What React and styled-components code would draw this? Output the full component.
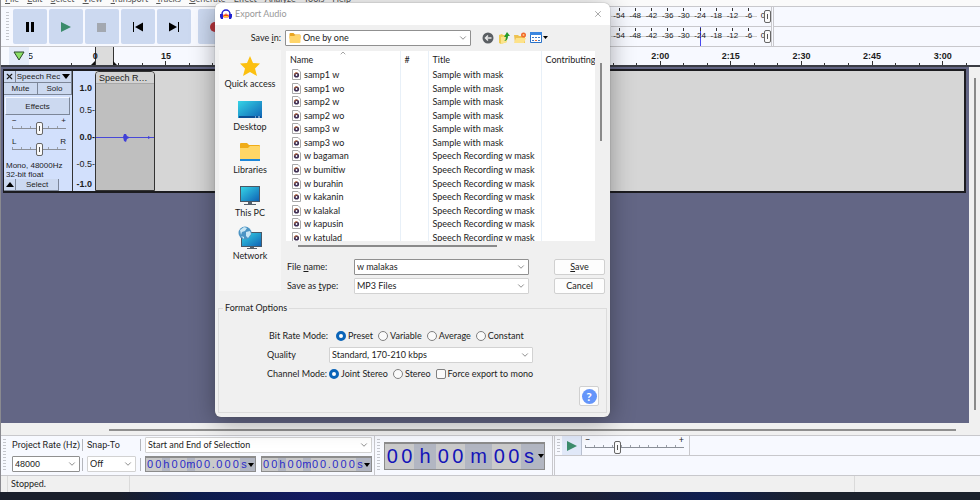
import React, { useState } from 'react'
import styled, { createGlobalStyle } from "styled-components";
import { ChevronDown, ChevronUp, X } from "lucide-react";

const menus = ["File", "Edit", "Select", "View", "Transport", "Tracks", "Generate", "Effect", "Analyze", "Tools", "Help"];
const levels = ["-54", "-48", "-42", "-36", "-30", "-24", "-18", "-12", "-6", "0"];
const times = ["0", "15", "30", "45", "1:00", "1:15", "1:30", "1:45", "2:00", "2:15", "2:30", "2:45", "3:00"];

const files = [
    { name: "samp1 w", title: "Sample with mask" },
    { name: "samp1 wo", title: "Sample with mask" },
    { name: "samp2 w", title: "Sample with mask" },
    { name: "samp2 wo", title: "Sample with mask" },
    { name: "samp3 w", title: "Sample with mask" },
    { name: "samp3 wo", title: "Sample with mask" },
    { name: "w bagaman", title: "Speech Recording w mask" },
    { name: "w bumitiw", title: "Speech Recording w mask" },
    { name: "w burahin", title: "Speech Recording w mask" },
    { name: "w kakanin", title: "Speech Recording w mask" },
    { name: "w kalakal", title: "Speech Recording w mask" },
    { name: "w kapusin", title: "Speech Recording w mask" },
    { name: "w katulad", title: "Speech Recording w mask" },
];

function Select({ value, options = [], ...rest }) {
    return (
        <SelectBox>
            <select defaultValue={value} {...rest}>
                {[value, ...options].map(o => <option key={o}>{o}</option>)}
            </select>
            <ChevronDown size={10} strokeWidth={2} />
        </SelectBox>
    )
}

function Meter({ label, peak }) {
    return (
        <MeterRow>
            <Scale>
                {levels.map(l => <Level key={l} $peak={peak === l}><span>{l}</span></Level>)}
            </Scale>
            <Range type="range" defaultValue="100" aria-label={label} />
        </MeterRow>
    )
}

function Transport() {
    return (
        <TopBar>
            <TransportTools>
                <Grip />
                <ToolButton aria-label="Pause">
                    <svg width="10" height="10" viewBox="0 0 10 10"><path d="M1 0h3v10H1zM6 0h3v10H6z" /></svg>
                </ToolButton>
                <ToolButton aria-label="Play">
                    <svg width="12" height="12" viewBox="0 0 12 12"><path fill="#3c8c6c" d="M1 1l10 5-10 5z" /></svg>
                </ToolButton>
                <ToolButton aria-label="Stop">
                    <svg width="10" height="10" viewBox="0 0 10 10"><path fill="#a3a8b0" d="M0 1h9v9H0z" /></svg>
                </ToolButton>
                <ToolButton aria-label="Skip to start">
                    <svg width="12" height="12" viewBox="0 0 12 12"><path d="M1 1h1v10H1zM11 1.500v9L3 6z" /></svg>
                </ToolButton>
                <ToolButton aria-label="Skip to end">
                    <svg width="12" height="12" viewBox="0 0 12 12"><path d="M10 1h1v10h-1zM1 1.500v9L9 6z" /></svg>
                </ToolButton>
                <ToolButton aria-label="Record" $apart>
                    <svg width="10" height="10" viewBox="0 0 10 10"><circle fill="#b8343c" cx="5" cy="5" r="5" /></svg>
                </ToolButton>
            </TransportTools>
            <Meters>
                <Meter label="Recording volume" />
                <Meter label="Playback volume" peak="-24" />
            </Meters>
            <MeterRest />
        </TopBar>
    )
}

function Timeline() {
    return (
        <Ruler>
            <PinButton aria-label="Pinned play head">
                <svg width="12" height="10" viewBox="0 0 12 10"><path d="M1 1h10L6 9z" fill="#8be065" stroke="#2d4a2c" /></svg>
            </PinButton>
            <Before>-15</Before>
            <RulerScale>
                {times.map((t, i) => (
                    <RulerCell key={t}>
                        {i === 0 && <Selected />}
                        <b>{t}</b>
                        <Ticks><i /><i /><i /></Ticks>
                    </RulerCell>
                ))}
            </RulerScale>
        </Ruler>
    )
}

function Track() {
    return (
        <TrackRow>
            <TrackPanel>
                <PanelRow>
                    <CloseTrack aria-label="Close track"><X size={9} strokeWidth={3} /></CloseTrack>
                    <PanelButton>Speech Rec
                        <svg width="8" height="5" viewBox="0 0 8 5"><path d="M0 0h8L4 5z" /></svg>
                    </PanelButton>
                </PanelRow>
                <PanelRow>
                    <PanelButton>Mute</PanelButton>
                    <PanelButton>Solo</PanelButton>
                </PanelRow>
                <EffectsButton>Effects</EffectsButton>
                <Knob>
                    <span>−</span><span>+</span>
                    <Range type="range" aria-label="Gain" $ticks />
                </Knob>
                <Knob>
                    <span>L</span><span>R</span>
                    <Range type="range" aria-label="Pan" $ticks />
                </Knob>
                <Info>Mono, 48000Hz<br />32-bit float</Info>
                <PanelRow>
                    <CloseTrack aria-label="Collapse">
                        <svg width="8" height="5" viewBox="0 0 8 5"><path d="M0 5h8L4 0z" /></svg>
                    </CloseTrack>
                    <SelectButton>Select</SelectButton>
                </PanelRow>
            </TrackPanel>
            <Amplitude>
                <b>1.0</b>
                <span>0.5-</span>
                <b>0.0-</b>
                <span>-0.5-</span>
                <b>-1.0</b>
            </Amplitude>
            <Clip>
                <ClipTitle>Speech R…</ClipTitle>
                <svg width="58" height="108" viewBox="0 0 58 108">
                    <path d="M0 53.500h58" stroke="#4848d8" />
                    <path fill="#4040d8" d="M27 53l1-3 2 0 1 2 2 1v1l-2 1-1 3-2-1zM52 52l3 1.500-3 1.500z" />
                </svg>
            </Clip>
            <TrackRest />
        </TrackRow>
    )
}

function FolderIcon({ size = 12 }) {
    return (
        <svg width={size} height={size} viewBox="0 0 24 24">
            <path fill="#e9a520" d="M1 4q0-2 2-2h6l3 3h9q2 0 2 2v6H1z" />
            <path fill="#ffd56a" d="M1 8h9l3-2h8q2 0 2 2v12q0 2-2 2H3q-2 0-2-2z" />
        </svg>
    )
}

function Screen({ stand }) {
    return (
        <>
            <defs>
                <linearGradient id="screen" x1="0" y1="0" x2="1" y2="1">
                    <stop offset="0" stopColor="#35d4e6" />
                    <stop offset="1" stopColor="#0f63b5" />
                </linearGradient>
            </defs>
            {stand && <path fill="#55606b" d="M10 18h4v3h4v1H6v-1h4z" />}
            {stand && <path fill="#4a5866" d="M2 3h20v16H2z" />}
        </>
    )
}

function Places() {
    return (
        <Sidebar>
            <Place>
                <svg width="24" height="24" viewBox="0 0 24 24"><path fill="#fcc010" d="M12 2l3 7 7 .6-5 5 2 7.400-7-4-7 4 2-7.400-5-5L9 9z" /></svg>
                Quick access
            </Place>
            <Place>
                <svg width="24" height="24" viewBox="0 0 24 24"><Screen /><path fill="url(#screen)" d="M0 4h24v17H0z" /><path fill="#0c4f94" d="M1 19h22v2H1z" /><path fill="#d8ecff" d="M17 19.500h1v1h-1zM20 19.500h2v1h-2z" /></svg>
                Desktop
            </Place>
            <Place>
                <svg width="24" height="24" viewBox="0 0 24 24">
                    <path fill="#f0ac18" d="M2 4q0-1 1-1h6l2 2h10q1 0 1 1v5H2z" />
                    <path fill="#ffd666" d="M2 8h8l2-2h9q1 0 1 1v13H2z" />
                    <path fill="#1d86d8" d="M2 19h20v2H2z" />
                </svg>
                Libraries
            </Place>
            <Place>
                <svg width="24" height="24" viewBox="0 0 24 24"><Screen stand /><path fill="url(#screen)" d="M3 4h18v14H3z" /></svg>
                This PC
            </Place>
            <Place>
                <svg width="24" height="24" viewBox="0 0 24 24">
                    <path fill="#55606b" d="M12 20h4v2h3v1H9v-1h3z" />
                    <path fill="#4a5866" d="M3 6h21v15H3z" />
                    <path fill="url(#screen)" d="M4 7h19v13H4z" />
                    <circle cx="7" cy="7" r="6.500" fill="#4c94c4" />
                    <path fill="#c9e6f4" d="M2 4l4-3 3 1-2 3-3 1-1 3zM8 6l4-1 1 3-3 4-2-2zM3 10l3 1v2z" />
                </svg>
                Network
            </Place>
        </Sidebar>
    )
}

function FileList() {
    return (
        <Browser>
            <ListPane>
                <ListBox>
                    <table>
                        <thead>
                            <tr><th><SortMark><ChevronUp size={8} /></SortMark>Name</th><th>#</th><th>Title</th><th>Contributing</th></tr>
                        </thead>
                        <tbody>
                            {files.map(f => (
                                <tr key={f.name}>
                                    <td>
                                        <FileName>
                                            <svg width="9" height="11" viewBox="0 0 9 11">
                                                <path d="M.5.5h5.500l2.500 2.500v7.500h-8z" fill="#fff" stroke="#a8a8a8" />
                                                <circle cx="4.500" cy="6" r="2.600" fill="#3d2d52" />
                                                <path d="M2.500 5.500a2 2 0 013-1.500" stroke="#d9722e" fill="none" />
                                                <circle cx="4.500" cy="6" r=".9" fill="#fff" />
                                            </svg>
                                            {f.name}
                                        </FileName>
                                    </td>
                                    <td />
                                    <td>{f.title}</td>
                                    <td />
                                </tr>
                            ))}
                        </tbody>
                    </table>
                </ListBox>
                <ListThumb />
            </ListPane>
            <ListThumbX />
            <SaveForm>
                <label htmlFor="filename">File <u>n</u>ame:</label>
                <SelectBox $strong>
                    <input id="filename" defaultValue="w malakas" />
                    <ChevronDown size={10} />
                </SelectBox>
                <Button><span><u>S</u>ave</span></Button>
                <label htmlFor="filetype">Save as <u>t</u>ype:</label>
                <Select id="filetype" value="MP3 Files" options={["WAV Files"]} />
                <Button>Cancel</Button>
            </SaveForm>
        </Browser>
    )
}

function FormatOptions() {
    const [mode, setMode] = useState("Preset");
    const [channel, setChannel] = useState("Joint Stereo");

    return (
        <Options>
            <legend>Format Options</legend>
            <OptionRow>
                <OptionLabel $wide>Bit Rate Mode:</OptionLabel>
                {["Preset", "Variable", "Average", "Constant"].map(m => (
                    <Choice key={m}>
                        <input type="radio" name="mode" checked={mode === m} onChange={() => setMode(m)} />{m}
                    </Choice>
                ))}
            </OptionRow>
            <OptionRow>
                <OptionLabel as="label" htmlFor="quality">Quality</OptionLabel>
                <Quality><Select id="quality" value="Standard, 170-210 kbps" options={["Medium, 145-185 kbps"]} /></Quality>
            </OptionRow>
            <OptionRow>
                <OptionLabel>Channel Mode:</OptionLabel>
                {["Joint Stereo", "Stereo"].map(c => (
                    <Choice key={c}>
                        <input type="radio" name="channel" checked={channel === c} onChange={() => setChannel(c)} />{c}
                    </Choice>
                ))}
                <Choice><input type="checkbox" />Force export to mono</Choice>
            </OptionRow>
            <HelpButton aria-label="Help"><span>?</span></HelpButton>
        </Options>
    )
}

function ExportDialog() {
    return (
        <Dialog role="dialog" aria-labelledby="dialog-title">
            <TitleBar>
                <svg width="12" height="12" viewBox="0 0 12 12">
                    <path d="M2 8V6a4 4 0 018 0v2" fill="none" stroke="#2020d0" strokeWidth="1.500" />
                    <path d="M0 6h3v5H1L0 9zM9 6h3v3l-1 2H9z" fill="#2020d0" />
                    <path d="M3 8l1-2 1 1 1-2 1 2 1-1 1 2-1 2-1-1-1 1-1-1-1 1z" fill="#f04818" />
                    <path d="M4 8h4v1H4z" fill="#ffd820" />
                </svg>
                <h1 id="dialog-title">Export Audio</h1>
                <button aria-label="Close"><X size={10} strokeWidth={2} /></button>
            </TitleBar>
            <SaveIn>
                <label htmlFor="folder">Save <u>i</u>n:</label>
                <FolderBox>
                    <FolderIcon />
                    <Select id="folder" value="One by one" options={["Desktop"]} />
                </FolderBox>
                <IconButton aria-label="Back">
                    <svg width="12" height="12" viewBox="0 0 12 12"><circle cx="6" cy="6" r="5.500" fill="#5b5f63" /><path d="M9.500 6H3.500M6 3.500L3.500 6 6 8.500" stroke="#e8e8e8" strokeWidth="1.500" fill="none" /></svg>
                </IconButton>
                <IconButton aria-label="Up one level">
                    <svg width="12" height="12" viewBox="0 0 12 12"><path fill="#edcb54" d="M1 3l3-1 1 1h4v7l-6 2-2-1z" /><path fill="#fbe48c" d="M3 5l6-1v6l-6 2z" /><path fill="#259b2c" d="M6 9q2-1 2-4H6l3-5 3 4h-2q0 5-4 5z" /></svg>
                </IconButton>
                <IconButton aria-label="New folder">
                    <svg width="12" height="12" viewBox="0 0 12 12"><path fill="#eec250" d="M0 3h4l1 1h6v7H1z" /><path fill="#fde28a" d="M2 6h10l-2 5H0z" /><circle cx="9.500" cy="3" r="2.500" fill="#f0682c" /><circle cx="9.500" cy="3" r="1" fill="#ffc77a" /></svg>
                </IconButton>
                <IconButton aria-label="View">
                    <svg width="18" height="12" viewBox="0 0 18 12"><path fill="#fff" stroke="#2a72c8" d="M.5.5h11v10H.5z" /><path fill="#3a86e0" d="M0 0h12v3H0z" /><path fill="#3c78c8" d="M2 5h2v1H2zM5 5h2v1H5zM8 5h2v1H8zM2 8h2v1H2zM8 8h2v1H8z" /><path fill="#e0703a" d="M5 8h2v1H5z" /><path d="M13 4h5l-2.500 3z" /></svg>
                </IconButton>
            </SaveIn>
            <DialogMain>
                <Places />
                <FileList />
            </DialogMain>
            <FormatOptions />
        </Dialog>
    )
}

function TimeBox({ groups, big, label }) {
    return (
        <Time $big={big} aria-label={label}>
            {groups.map((g, i) => (
                <TimeGroup key={i} $unit={/[hms]/.test(g)} $big={big} $text={g}>
                    {g.split("").map((c, j) => <span key={j}>{c}</span>)}
                </TimeGroup>
            ))}
            <button aria-label="Time format"><svg width="6" height="4" viewBox="0 0 6 4"><path d="M0 0h6L3 4z" /></svg></button>
        </Time>
    )
}

function BottomBar() {
    const short = ["00", "h", "00", "m", "00", ".", "000", "s"];
    return (
        <Bottom>
            <Grip />
            <Field $width={66}>
                <label htmlFor="rate">Project Rate (Hz)</label>
                <SelectBox $strong $arial>
                    <input id="rate" defaultValue="48000" />
                    <ChevronDown size={10} />
                </SelectBox>
            </Field>
            <Divider />
            <Field $width={49}>
                <label htmlFor="snap">Snap-To</label>
                <Select id="snap" value="Off" options={["Nearest", "Prior"]} />
            </Field>
            <Divider />
            <Field $width={227}>
                <Select aria-label="Selection mode" value="Start and End of Selection" options={["Start and Length of Selection"]} />
                <TimePair>
                    <TimeBox groups={short} label="Selection start" />
                    <TimeBox groups={short} label="Selection end" />
                </TimePair>
            </Field>
            <BigTime>
                <Grip />
                <TimeBox groups={["00", "h", "00", "m", "00", "s"]} big label="Audio position" />
            </BigTime>
            <SpeedArea>
                <SpeedBar>
                    <Grip />
                    <PlayAtSpeed aria-label="Play at speed">
                        <svg width="12" height="12" viewBox="0 0 12 12"><path fill="#3c8c6c" d="M1 1l10 5-10 5z" /></svg>
                    </PlayAtSpeed>
                    <Speed>
                        <span>−</span><span>+</span>
                        <Range type="range" defaultValue="32" aria-label="Playback speed" $ticks />
                    </Speed>
                </SpeedBar>
            </SpeedArea>
        </Bottom>
    )
}

function App() {
    return (
        <Window>
            <GlobalStyle />
            <MenuBar>{menus.map(m => <button key={m}><u>{m[0]}</u>{m.slice(1)}</button>)}</MenuBar>
            <Transport />
            <Timeline />
            <Workspace>
                <Canvas><Track /></Canvas>
                <ScrollY />
            </Workspace>
            <ScrollX />
            <BottomBar />
            <Status><span>Stopped.</span><span /><span /></Status>
            <Taskbar />
            <ExportDialog />
        </Window>
    )
}

export default App;

const ui = `"Lato", "Open Sans", sans-serif`;
const arial = `"Liberation Sans", Arial, sans-serif`;

const GlobalStyle = createGlobalStyle`
  * {
    box-sizing: border-box;
  }
  body {
    margin: 0;
    overflow: hidden;
    font: 9px/12px ${ui};
    color: #1c1c1c;
  }
  button, input, select {
    font: inherit;
    color: inherit;
    margin: 0;
    padding: 0;
    border: 0;
    background: none;
    border-radius: 0;
  }
  svg {
    display: block;
    flex: none;
  }
`

const Window = styled.div`
  position: relative;
  display: flex;
  flex-direction: column;
  height: 100vh;
  background: #f7f9ff;
  border-left: 1px solid #8a8a90;
`

const MenuBar = styled.nav`
  display: flex;
  align-items: flex-end;
  gap: 8px;
  height: 6px;
  padding-left: 4px;
  overflow: hidden;
  background: #fafafa;
  color: #555;
  line-height: 15px;
  flex: none;
`

const TopBar = styled.div`
  display: flex;
  height: 41px;
  flex: none;
  border-top: 1px solid #c8c8cc;
  border-bottom: 1px solid #c8c8cc;
`

const Grip = styled.div`
  width: 3px;
  margin: 3px 2px;
  background: repeating-linear-gradient(#c4c6cc 0 1px, transparent 1px 3px);
  flex: none;
`

const TransportTools = styled.div`
  display: flex;
  align-items: stretch;
  gap: 2px;
  padding: 2px 0 2px 3px;
  flex: 0 0 610px;
`

const ToolButton = styled.button`
  width: 34px;
  display: grid;
  place-items: center;
  background: #ccd9f0;
  border-radius: 2px;
  margin-left: ${p => p.$apart ? 5 : 0}px;
`

const Meters = styled.div`
  flex: 0 0 161px;
  display: grid;
  grid-template-rows: 1fr 1fr;
  border-right: 1px solid #c8c8cc;
`

const MeterRow = styled.div`
  display: grid;
  grid-template-columns: 100%;
  align-items: center;
  overflow: hidden;
  border-bottom: 1px solid #c8c8cc;
  > * {
    grid-area: 1 / 1;
  }
  &:last-child {
    border: 0;
  }
`

const MeterRest = styled.div`
  flex: 1;
  margin-left: 1px;
  border-left: 1px solid #c8c8cc;
  background: linear-gradient(#c8c8cc, #c8c8cc) 0 19px / 100% 1px no-repeat;
`

const Scale = styled.div`
  display: grid;
  grid-template-columns: repeat(10, 1fr);
  width: 162px;
  height: 100%;
  font: 8px/18px ${arial};
`

const Level = styled.div`
  text-align: center;
  background:
    linear-gradient(#333, #333) 50% 1px / 1px 3px no-repeat,
    linear-gradient(#4848f0, #4848f0) 50% 0 / ${p => p.$peak ? 1 : 0}px 100% no-repeat,
    linear-gradient(#ccc, #ccc) 0 50% / 100% 1px no-repeat;
  &:last-child {
    background: none;
    padding-right: 4px;
  }
`

const Range = styled.input`
  appearance: none;
  width: 100%;
  height: 13px;
  background:
    ${p => p.$ticks ? `linear-gradient(#8a8f98, #8a8f98) 0 6px / 100% 1px no-repeat,
    repeating-linear-gradient(90deg, #9a9fa8 0 1px, transparent 1px 9px) 0 4px / 100% 2px no-repeat` : "none"};
  &::-webkit-slider-thumb {
    appearance: none;
    width: 7px;
    height: 13px;
    border: 1px solid #666;
    border-radius: 2px;
    background: linear-gradient(#555, #555) 50% 50% / 1px 5px no-repeat #fafafa;
  }
`

const Ruler = styled.div`
  display: flex;
  height: 20px;
  flex: none;
  border-bottom: 2px solid #3a3c44;
  font: bold 9px/18px ${arial};
  overflow: hidden;
`

const PinButton = styled.button`
  width: 20px;
  margin-left: 8px;
  display: grid;
  place-items: center;
  background: #e4ebf8;
  flex: none;
`

const Before = styled.span`
  display: flex;
  justify-content: flex-end;
  width: 4px;
  overflow: hidden;
  flex: none;
  font-weight: normal;
`

const RulerScale = styled.div`
  display: grid;
  grid-template-columns: repeat(13, 1fr);
  flex: 1;
  margin-left: 27px;
  padding-right: 2px;
`

const RulerCell = styled.div`
  position: relative;
  display: grid;
  text-align: center;
  > * {
    grid-area: 1 / 1;
  }
`

const Ticks = styled.div`
  display: grid;
  grid-template-columns: repeat(3, 1fr);
  align-items: end;
  justify-items: center;
  i {
    width: 1px;
    height: 2px;
    background: #333;
  }
  i:nth-child(2) {
    height: 4px;
  }
`

const Selected = styled.div`
  justify-self: start;
  margin-left: 50%;
  width: 19px;
  border-left: 1px solid #333;
  border-right: 1px solid #333;
  background: #dcdcdc;
  &::before, &::after {
    content: "";
    position: absolute;
    bottom: 0;
    left: calc(50% - 4px);
    border-bottom: 4px solid #111;
    border-left: 4px solid transparent;
  }
  &::after {
    left: calc(50% + 18px);
    border-left: 0;
    border-right: 4px solid transparent;
  }
`

const Workspace = styled.div`
  display: flex;
  flex: 1;
  min-height: 0;
`

const Canvas = styled.main`
  flex: 1;
  padding: 2px 3px 0 2px;
  background: #636685;
`

const ScrollY = styled.div`
  width: 11px;
  background: linear-gradient(#8a8a8a, #8a8a8a) 5px 11px / 2px calc(100% - 24px) no-repeat #f0f0f0;
`

const ScrollX = styled.div`
  height: 12px;
  flex: none;
  background: linear-gradient(#8f8f8f, #8f8f8f) 108px 6px / calc(100% - 132px) 2px no-repeat #f0f0f0;
`

const TrackRow = styled.div`
  display: flex;
  border: 1px solid #1c1c20;
  border-width: 2px 2px 2px 1px;
  height: 124px;
  background: #d6d6d6;
  font: 8px/9px ${arial};
`

const TrackPanel = styled.div`
  width: 69px;
  background: #d2e0fc;
  border-right: 1px solid #333;
  display: flex;
  flex-direction: column;
`

const PanelRow = styled.div`
  display: flex;
  height: 12px;
  flex: none;
`

const PanelButton = styled.button`
  flex: 1;
  display: flex;
  align-items: center;
  justify-content: center;
  gap: 2px;
  white-space: nowrap;
  background: #ccd9f0;
  border-right: 1px solid #7c8698;
  border-bottom: 1px solid #7c8698;
`

const CloseTrack = styled(PanelButton)`
  flex: 0 0 12px;
`

const SelectButton = styled(PanelButton)`
  flex: 0 0 43px;
`

const EffectsButton = styled.button`
  height: 18px;
  flex: none;
  margin: 2px 2px 3px 1px;
  background: #ccd9f0;
  border: 1px solid #7c8698;
  border-top-color: #f2f6ff;
  border-left-color: #f2f6ff;
`

const Knob = styled.div`
  display: grid;
  grid-template-columns: 1fr 1fr;
  grid-template-rows: 4px 13px;
  line-height: 6px;
  margin: 0 6px 4px 8px;
  span:nth-child(2) {
    text-align: right;
  }
  input {
    grid-column: 1 / 3;
  }
`

const Info = styled.div`
  white-space: nowrap;
  padding: 1px 0 0 2px;
  margin-bottom: auto;
`

const Amplitude = styled.div`
  width: 22px;
  display: grid;
  grid-template-rows: 17px 27px 27px 27px 1fr;
  align-items: center;
  padding-top: 8px;
  background: #d2e0fc;
  font-size: 9px;
  line-height: 10px;
  text-align: right;
  b:first-child, b:last-child {
    padding-right: 3px;
  }
`

const Clip = styled.div`
  width: 60px;
  border: 1px solid #333;
  border-radius: 4px 4px 0 0;
  background: #bfbfbf;
  overflow: hidden;
`

const ClipTitle = styled.div`
  height: 12px;
  padding-left: 3px;
  font-size: 9px;
  line-height: 12px;
  background: #d2d2d2;
  border-bottom: 1px solid #a8a8a8;
`

const TrackRest = styled.div`
  flex: 1;
`

const Bottom = styled.div`
  display: flex;
  height: 41px;
  flex: none;
  border-top: 1px solid #c8c8cc;
  border-bottom: 1px solid #c8c8cc;
`

const Field = styled.div`
  width: ${p => p.$width}px;
  margin-left: 4px;
  display: grid;
  grid-template-rows: 16px 16px;
  row-gap: 3px;
  padding-top: 1px;
  align-items: center;
  flex: none;
  label {
    font: 9px/14px Roboto, sans-serif;
    white-space: nowrap;
  }
`

const Divider = styled.div`
  width: 1px;
  margin: 3px 0 4px 4px;
  background: linear-gradient(#b4b6bc 0 12px, transparent 12px 19px, #b4b6bc 19px);
  flex: none;
`

const SelectBox = styled.div`
  display: grid;
  grid-template-columns: 1fr 12px;
  align-items: center;
  height: 16px;
  width: 100%;
  background: #fff;
  border: 1px solid ${p => p.$strong ? "#909090" : "#d2d2d2"};
  border-radius: 1px;
  font-family: ${p => p.$arial ? arial : ui};
  select, input {
    appearance: none;
    grid-area: 1 / 1 / 2 / 3;
    width: 100%;
    height: 14px;
    padding: 0 12px 0 2px;
    line-height: 14px;
    outline: 0;
  }
  > svg {
    grid-area: 1 / 2;
    color: #777;
    pointer-events: none;
  }
`

const TimePair = styled.div`
  display: grid;
  grid-template-columns: 1fr 1fr;
  gap: 5px;
`

const Time = styled.div`
  display: flex;
  height: ${p => p.$big ? 28 : 16}px;
  border: 1px solid #8c8c8c;
  border-width: 2px 1px 1px;
  background: #b2b6c2;
  color: ${p => p.$big ? "#1414b8" : "#2c2cc8"};
  font-family: ${arial};
  font-size: ${p => p.$big ? 20 : 11}px;
  line-height: ${p => p.$big ? 25 : 13}px;
  button {
    width: 7px;
    display: grid;
    place-items: center;
  }
`

const bigWidths = { "00": 29, h: 22, m: 27, s: 16 };

const TimeGroup = styled.div`
  flex: ${p => p.$big ? `0 0 ${bigWidths[p.$text]}px` : p.$text === "." ? "1 1 0" : `${p.$text.length * 2} 1 0`};
  display: flex;
  background: ${p => p.$unit ? "#b2b6c2" : "#cacaca"};
  span {
    flex: 1 1 0;
    width: 0;
    display: flex;
    justify-content: center;
  }
`

const BigTime = styled.div`
  display: flex;
  align-items: center;
  margin-left: 2px;
  padding-right: 7px;
  border-left: 1px solid #c8c8cc;
  border-right: 1px solid #c8c8cc;
  flex: none;
  > :first-child {
    align-self: stretch;
    margin-right: 4px;
  }
`

const SpeedArea = styled.div`
  flex: 1;
  margin-left: 1px;
  border-left: 1px solid #c8c8cc;
`

const SpeedBar = styled.div`
  display: flex;
  height: 20px;
  border-bottom: 1px solid #c8c8cc;
  background: linear-gradient(#c8c8cc, #c8c8cc) 134px 0 / 1px 100% no-repeat;
`

const PlayAtSpeed = styled.button`
  width: 20px;
  display: grid;
  place-items: center;
  background: #e0e8f8;
  border-right: 1px solid #b8c0d0;
`

const Speed = styled(Knob)`
  width: 99px;
  margin: 1px 0 0 3px;
`

const Status = styled.div`
  display: grid;
  grid-template-columns: 122px 1fr 126px;
  height: 16px;
  padding-left: 6px;
  line-height: 16px;
  background: #f0f0f0;
  flex: none;
  span {
    border-left: 1px solid #dadada;
    padding-left: 3px;
  }
`

const Taskbar = styled.div`
  height: 8px;
  flex: none;
  margin-left: -1px;
  background: linear-gradient(90deg, #1a1f2b 0 12%, #0c1c4c 20%, #141a60 32%, #0c1c4c 45%, #1c2036 60%, #0f1e50 72%, #1b212c 82%);
`

const Dialog = styled.section`
  position: absolute;
  left: 214px;
  top: 3px;
  z-index: 2;
  width: 395px;
  padding-bottom: 4px;
  border-radius: 6px;
  background: #f0f0f0;
  box-shadow: 0 0 1px #555, 0 4px 24px rgba(0, 0, 0, 0.35);
  overflow: hidden;
`

const TitleBar = styled.header`
  display: flex;
  align-items: center;
  gap: 3px;
  height: 22px;
  padding: 0 7px 0 5px;
  background: #fff;
  color: #999;
  h1 {
    flex: 1;
    margin: 0;
    font-size: 9px;
    font-weight: normal;
  }
`

const SaveIn = styled.div`
  display: flex;
  align-items: center;
  gap: 4px;
  height: 25px;
  > label {
    width: 66px;
    text-align: right;
  }
`

const FolderBox = styled.div`
  display: grid;
  align-items: center;
  width: 186px;
  margin-right: 7px;
  > * {
    grid-area: 1 / 1;
  }
  > svg {
    z-index: 1;
    margin-left: 4px;
  }
  > div {
    border-color: #909090;
  }
  select {
    padding-left: 17px;
  }
`

const IconButton = styled.button`
  display: block;
`

const DialogMain = styled.div`
  display: flex;
  gap: 5px;
  padding-left: 4px;
`

const Sidebar = styled.div`
  width: 62px;
  height: 241px;
  padding-top: 4px;
  background: #f6f6f6;
`

const Place = styled.button`
  display: flex;
  flex-direction: column;
  align-items: center;
  width: 100%;
  height: 43px;
`

const Browser = styled.div`
  flex: 1;
  padding-top: 1px;
`

const ListPane = styled.div`
  display: flex;
`

const ListBox = styled.div`
  width: 309px;
  height: 190px;
  overflow: hidden;
  background: #fff;
  table {
    table-layout: fixed;
    width: 100%;
    height: 193px;
    border-collapse: collapse;
    line-height: 13px;
    white-space: nowrap;
  }
  th {
    position: relative;
    height: 17px;
    font-weight: normal;
    text-align: left;
    padding: 0 0 0 4px;
  }
  td {
    padding: 0 0 0 4px;
  }
  th + th, td + td {
    border-left: 1px solid #e8f0f8;
  }
  th:nth-child(1) {
    width: 114px;
  }
  th:nth-child(2) {
    width: 28px;
  }
  th:nth-child(3) {
    width: 113px;
  }
`

const SortMark = styled.span`
  position: absolute;
  top: -2px;
  left: 53px;
  color: #777;
`

const FileName = styled.span`
  display: flex;
  align-items: center;
  gap: 3px;
  padding-left: 2px;
`

const ListThumb = styled.div`
  width: 2px;
  height: 78px;
  margin: 12px 0 0 5px;
  background: #8a8a8a;
`

const ListThumbX = styled.div`
  width: 199px;
  height: 2px;
  margin: 4px 0 12px 12px;
  background: #8a8a8a;
`

const SaveForm = styled.div`
  display: grid;
  grid-template-columns: 67px 175px 51px;
  row-gap: 3px;
  align-items: center;
  padding-left: 1px;
  > button {
    margin-left: 25px;
    width: 51px;
  }
`

const Button = styled.button`
  height: 16px;
  line-height: 14px;
  background: #fdfdfd;
  border: 1px solid #d0d0d0;
  border-radius: 2px;
`

const Options = styled.fieldset`
  margin: 8px 3px 0;
  padding: 14px 7px 6px 48px;
  border: 1px solid #dcdcdc;
  display: flex;
  flex-direction: column;
  gap: 3px;
  legend {
    margin-left: -44px;
    padding: 0 2px;
  }
`

const OptionRow = styled.div`
  display: flex;
  align-items: center;
  gap: 5px;
  height: 16px;
`

const OptionLabel = styled.span`
  width: ${p => p.$wide ? 69 : 62}px;
  padding-left: ${p => p.$wide ? 2 : 0}px;
  margin-right: -5px;
  white-space: nowrap;
`

const Quality = styled.div`
  width: 204px;
`

const Choice = styled.label`
  display: flex;
  align-items: center;
  gap: 2px;
  white-space: nowrap;
  input {
    appearance: none;
    width: 10px;
    height: 10px;
    border: 1px solid #808080;
    background: #fafafa;
    border-radius: 2px;
  }
  input[type="radio"] {
    border-radius: 50%;
  }
  input[type="radio"]:checked {
    border: 3px solid #0a64b8;
    background: #fff;
  }
`

const HelpButton = styled.button`
  align-self: flex-end;
  width: 20px;
  height: 20px;
  margin-top: 1px;
  display: grid;
  place-items: center;
  background: #fdfdfd;
  border: 1px solid #d0d0d0;
  border-radius: 2px;
  span {
    width: 15px;
    border-radius: 50%;
    background: #6495fa;
    color: #fff;
    font: bold 12px/15px ${ui};
  }
`
